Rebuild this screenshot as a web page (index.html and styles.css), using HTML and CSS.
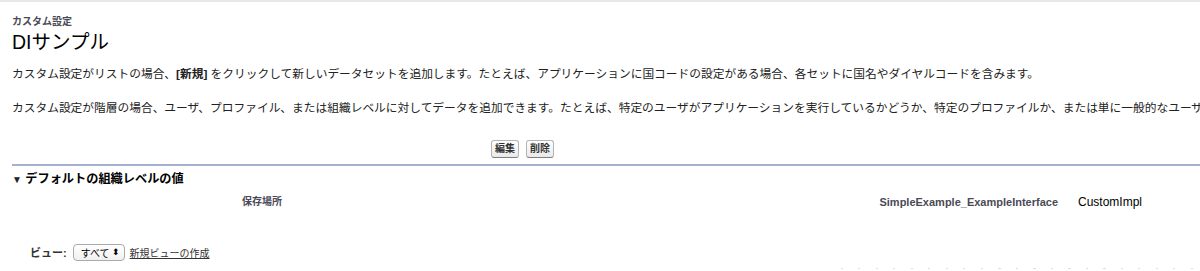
FILE: index.html
```html
<!DOCTYPE html>
<html lang="ja">
<head>
<meta charset="utf-8">
<link rel="stylesheet" href="styles.css">
</head>
<body>
<div class="page">
  <div class="header">
    <div class="type">カスタム設定</div>
    <h1 class="title">DIサンプル</h1>
  </div>
  <p class="desc">カスタム設定がリストの場合、<b>[新規]</b> をクリックして新しいデータセットを追加します。たとえば、アプリケーションに国コードの設定がある場合、各セットに国名やダイヤルコードを含みます。</p>
  <p class="desc second">カスタム設定が階層の場合、ユーザ、プロファイル、または組織レベルに対してデータを追加できます。たとえば、特定のユーザがアプリケーションを実行しているかどうか、特定のプロファイルか、または単に一般的なユーザかによって、異なる値を指定できます。</p>
  <div class="buttons">
    <button class="btn">編集</button>
    <button class="btn">削除</button>
  </div>
  <div class="section">
    <h3 class="section-title"><span class="tri">▼</span> デフォルトの組織レベルの値</h3>
    <div class="detail">
      <div class="label label-ja">保存場所</div>
      <div class="value"></div>
      <div class="label">SimpleExample_ExampleInterface</div>
      <div class="value">CustomImpl</div>
    </div>
  </div>
  <div class="views">
    <span class="views-label">ビュー:</span>
    <span class="select">すべて <span class="arrows">⬍</span></span>
    <a class="link" href="#">新規ビューの作成</a>
  </div>
  <div class="dots"></div>
</div>
</body>
</html>
```
FILE: styles.css
```css
html, body {
  margin: 0;
  padding: 0;
  background: #fff;
}
body {
  font-family: "Liberation Sans", "Noto Sans CJK JP", sans-serif;
  color: #222;
  overflow: hidden;
  border-top: 2px solid #e8e8e8;
}
.page {
  padding-left: 12px;
  width: 1188px;
}
.header {
  padding-top: 13px;
}
.type {
  font-size: 10px;
  font-weight: bold;
  color: #4a4a56;
  line-height: 14px;
}
.title {
  margin: 0;
  font-size: 19.5px;
  font-weight: normal;
  color: #000;
  line-height: 24px;
  margin-top: 1px;
}
.desc {
  margin: 0;
  font-size: 11.73px;
  line-height: 16px;
  color: #222;
  white-space: nowrap;
  overflow: hidden;
  margin-top: 12px;
}
.desc.second {
  margin-top: 18px;
}
.buttons {
  display: flex;
  gap: 7px;
  padding-left: 479px;
  margin-top: 21px;
  margin-bottom: 3px;
  height: 24px;
  align-items: center;
}
.btn {
  font-family: "Liberation Sans", "Noto Sans CJK JP", sans-serif;
  font-size: 10px;
  font-weight: bold;
  color: #333;
  background: linear-gradient(#fff, #e9e9e9);
  border: 1px solid #b5b5b5;
  border-bottom-color: #7f7f7f;
  border-radius: 3px;
  padding: 1px 3px;
  height: 18px;
  line-height: 14px;
}
.section {
  border-top: 2px solid #a5b1cf;
}
.section-title {
  margin: 0;
  font-size: 12.2px;
  font-weight: bold;
  color: #000;
  line-height: 16px;
  padding-top: 5px;
}
.tri {
  font-size: 10px;
  color: #222;
}
.detail {
  display: grid;
  grid-template-columns: 280px 576px 200px 1fr;
  margin-top: 6px;
  align-items: center;
  line-height: 16px;
}
.label {
  text-align: right;
  padding-right: 10px;
  font-size: 11px;
  font-weight: bold;
  color: #4a4a56;
}
.label-ja {
  font-size: 10px;
}
.value {
  padding-left: 10px;
  font-size: 12px;
  color: #000;
}
.views {
  display: flex;
  align-items: center;
  padding-left: 18px;
  margin-top: 33px;
  height: 18px;
  font-size: 11px;
}
.views-label {
  font-weight: bold;
  color: #333;
  margin-right: 6px;
}
.select {
  display: inline-flex;
  align-items: center;
  border: 1px solid #aaa;
  border-radius: 4px;
  height: 15px;
  padding: 0 4px 0 7px;
  font-size: 10px;
  background: linear-gradient(#fff, #f0f0f0);
  color: #000;
  margin-right: 5px;
}
.arrows {
  font-size: 9px;
  margin-left: 2px;
}
.link {
  color: #333;
  text-decoration: underline;
  font-size: 10px;
}
.dots {
  margin-left: 829px;
  width: 360px;
  height: 1px;
  margin-top: 7px;
  background: repeating-linear-gradient(90deg, #ddd 0 2px, transparent 2px 17.5px);
}
```
